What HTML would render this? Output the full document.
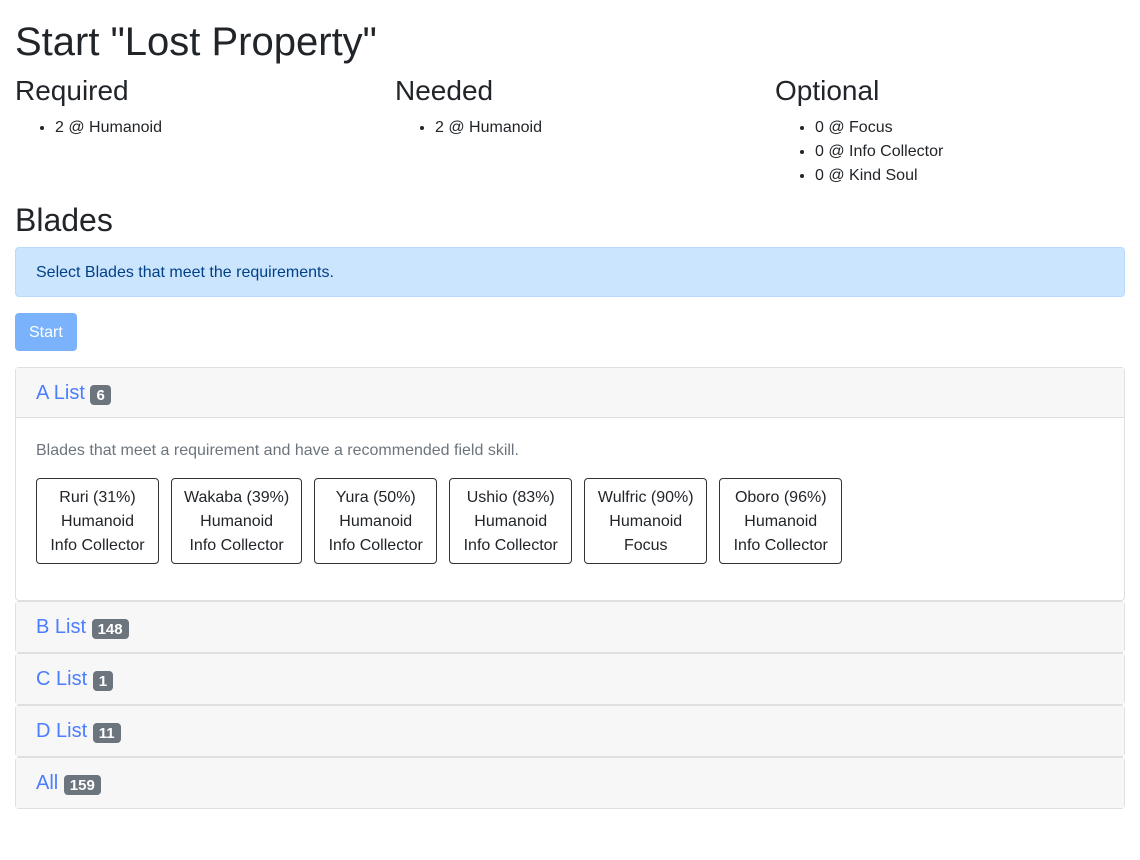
<!DOCTYPE html>
<html><head><meta charset="utf-8"><style>
*{box-sizing:border-box}
body{margin:0;padding:18px 15px 0;font-family:"Liberation Sans",sans-serif;font-size:16px;line-height:24px;color:#212529;background:#fff}
h1{font-size:40px;line-height:48px;font-weight:500;margin:0 0 8px}
h3{font-size:28px;line-height:33.6px;font-weight:500;margin:0 0 8px}
h2{font-size:32px;line-height:38.4px;font-weight:500;margin:0 0 8px}
.row{display:flex;width:1140px}
.col{width:380px;flex:none}
ul{margin:0 0 13px;padding-left:40px}
.alert{background:#cce5ff;border:1px solid #b8daff;color:#004085;border-radius:4px;padding:13px 20px 11px;margin-bottom:16px;height:50px}
.btn{display:inline-block;background:#7ab3fb;color:#fff;border-radius:4px;padding:8px 14px 4px;height:38px;margin-bottom:16px}
.card{border:1px solid #dfdfdf;border-radius:4px;width:1110px;margin-bottom:0}
.hd{background:#f7f7f7;height:50px;padding:12px 20px;font-size:20px;line-height:26px;color:#4a7dff}
.card.open .hd{border-bottom:1px solid #dfdfdf}
.badge{display:inline-block;background:#6c757d;color:#fff;font-size:15px;font-weight:bold;line-height:15px;padding:3px 6px 2px;border-radius:4px;vertical-align:-1px}
.bd{padding:20px 20px 20px}
.desc{color:#6c757d;margin-bottom:16px;position:relative;top:1px}
.blades{display:flex}
.b{border:1px solid #333;border-radius:4px;padding:7px 12px 3px;text-align:center;margin-right:12px;margin-bottom:16px;height:86px;min-width:123px}
</style></head><body>
<h1>Start "Lost Property"</h1>
<div class="row">
<div class="col"><h3>Required</h3><ul><li>2 @ Humanoid</li></ul></div>
<div class="col"><h3>Needed</h3><ul><li>2 @ Humanoid</li></ul></div>
<div class="col"><h3>Optional</h3><ul><li>0 @ Focus</li><li>0 @ Info Collector</li><li>0 @ Kind Soul</li></ul></div>
</div>
<h2>Blades</h2>
<div class="alert">Select Blades that meet the requirements.</div>
<div class="btn">Start</div>
<div class="card open"><div class="hd">A List <span class="badge">6</span></div>
<div class="bd"><div class="desc">Blades that meet a requirement and have a recommended field skill.</div>
<div class="blades">
<div class="b">Ruri (31%)<br>Humanoid<br>Info Collector</div>
<div class="b">Wakaba (39%)<br>Humanoid<br>Info Collector</div>
<div class="b">Yura (50%)<br>Humanoid<br>Info Collector</div>
<div class="b">Ushio (83%)<br>Humanoid<br>Info Collector</div>
<div class="b">Wulfric (90%)<br>Humanoid<br>Focus</div>
<div class="b">Oboro (96%)<br>Humanoid<br>Info Collector</div>
</div></div></div>
<div class="card"><div class="hd">B List <span class="badge">148</span></div></div>
<div class="card"><div class="hd">C List <span class="badge">1</span></div></div>
<div class="card"><div class="hd">D List <span class="badge">11</span></div></div>
<div class="card"><div class="hd">All <span class="badge">159</span></div></div>
</body></html>
